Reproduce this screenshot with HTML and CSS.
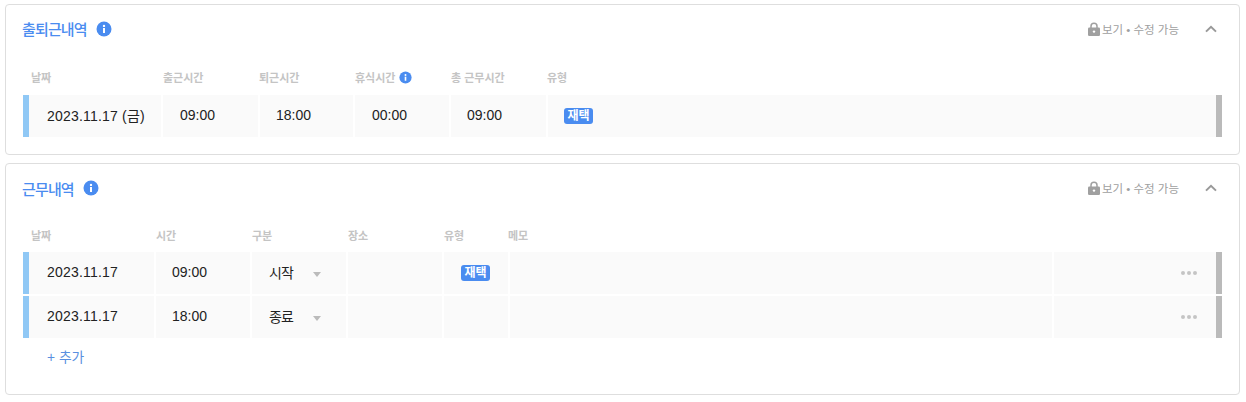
FILE: index.html
```html
<!DOCTYPE html>
<html lang="ko">
<head>
<meta charset="utf-8">
<title>근무내역</title>
<link rel="stylesheet" href="styles.css">
</head>
<body>
<svg class="defs" width="0" height="0" aria-hidden="true">
  <symbol id="info" viewBox="0 0 16 16"><circle cx="8" cy="8" r="7.5" fill="#4a8cf0"/><rect x="7" y="7" width="2" height="5" fill="#fff"/><circle cx="8" cy="4.9" r="1.2" fill="#fff"/></symbol>
  <symbol id="lock" viewBox="0 0 12 14"><path d="M3 6V4.2a3 3 0 0 1 6 0V6" fill="none" stroke="#a0a0a0" stroke-width="1.5"/><rect x="0" y="5.6" width="12" height="8.4" rx="1.2" fill="#a0a0a0"/><circle cx="6" cy="9.6" r="1.2" fill="#fff"/></symbol>
  <symbol id="chev" viewBox="0 0 12 8"><path d="M1 6.6 6 1.8l5 4.8" fill="none" stroke="#999" stroke-width="2"/></symbol>
</svg>
<section class="card card-a">
  <header class="head">
    <h2 class="title">출퇴근내역</h2>
    <svg class="info info-lg"><use href="#info"/></svg>
    <div class="perm"><svg class="lock"><use href="#lock"/></svg><span>보기 • 수정 가능</span></div>
    <svg class="chev"><use href="#chev"/></svg>
  </header>
  <div class="labels cols-a">
    <span>날짜</span><span>출근시간</span><span>퇴근시간</span>
    <span class="with-info">휴식시간 <svg class="info info-sm"><use href="#info"/></svg></span>
    <span>총 근무시간</span><span>유형</span>
  </div>
  <div class="row cols-a">
    <div class="cell date">2023.11.17 (금)</div>
    <div class="cell time">09:00</div>
    <div class="cell time">18:00</div>
    <div class="cell time">00:00</div>
    <div class="cell time">09:00</div>
    <div class="cell tagcell"><span class="tag">재택</span></div>
  </div>
</section>
<section class="card card-b">
  <header class="head">
    <h2 class="title">근무내역</h2>
    <svg class="info info-lg"><use href="#info"/></svg>
    <div class="perm"><svg class="lock"><use href="#lock"/></svg><span>보기 • 수정 가능</span></div>
    <svg class="chev"><use href="#chev"/></svg>
  </header>
  <div class="labels cols-b">
    <span>날짜</span><span>시간</span><span>구분</span><span>장소</span><span>유형</span><span>메모</span>
  </div>
  <div class="row cols-b">
    <div class="cell date">2023.11.17</div>
    <div class="cell time">09:00</div>
    <div class="cell select">시작<i class="caret"></i></div>
    <div class="cell"></div>
    <div class="cell tagcell"><span class="tag">재택</span></div>
    <div class="cell"></div>
    <div class="cell more"><i></i><i></i><i></i></div>
  </div>
  <div class="row cols-b">
    <div class="cell date">2023.11.17</div>
    <div class="cell time">18:00</div>
    <div class="cell select">종료<i class="caret"></i></div>
    <div class="cell"></div>
    <div class="cell"></div>
    <div class="cell"></div>
    <div class="cell more"><i></i><i></i><i></i></div>
  </div>
  <div class="add">+ 추가</div>
</section>
</body>
</html>
```
FILE: styles.css
```css
* { box-sizing: border-box; }
html, body { margin: 0; padding: 0; }
body {
  width: 1246px;
  height: 402px;
  overflow: hidden;
  background: #fff;
  padding: 4px 6px 0 5px;
  font-family: "Liberation Sans", "Noto Sans CJK KR", sans-serif;
  color: #222;
}
.defs { position: absolute; }
.card {
  border: 1px solid #dedede;
  border-radius: 4px;
  padding: 0 17px 0 16px;
  background: #fff;
}
.card-a { height: 151px; margin-bottom: 8px; }
.card-b { height: 232px; }
.head { display: flex; align-items: center; height: 49px; }
.card-a .head { padding-bottom: 2px; }
.card-b .head { height: 48px; }
.title {
  margin: 0;
  font-size: 15px;
  font-weight: 500;
  letter-spacing: -0.85px;
  color: #4a8cf0;
}
.info { display: block; }
.info-lg { width: 16px; height: 16px; margin-left: 9px; }
.info-sm { width: 13px; height: 13px; margin-left: 4px; }
.perm {
  display: flex;
  align-items: center;
  gap: 2px;
  margin-left: auto;
  margin-right: 26px;
  font-size: 11.5px;
  color: #a0a0a0;
}
.lock { width: 12px; height: 14px; }
.chev { width: 12px; height: 8px; margin-right: 5px; }
.labels {
  display: grid;
  align-items: center;
  height: 41px;
  padding: 5px 0 0 9px;
  font-size: 11px;
  font-weight: 700;
  color: #c4c4c4;
}
.card-b .labels { height: 40px; padding-top: 6px; }
.labels span { white-space: nowrap; }
.with-info { display: flex; align-items: center; }
.cols-a { grid-template-columns: 134px 97px 95px 96px 97px 1fr; }
.labels.cols-a { grid-template-columns: 132px 96px 96px 96px 96px 1fr; }
.cols-b { grid-template-columns: 127px 96px 96px 96px 66px 544px 1fr; }
.labels.cols-b { grid-template-columns: 125px 96px 96px 96px 64px 1fr; }
.row {
  display: grid;
  height: 42px;
  margin-left: 1px;
  border-left: 6px solid #90c8f5;
  border-right: 6px solid #bababa;
  font-size: 14px;
  width: 1199px;
}
.row + .row { margin-top: 2px; }
.cell {
  display: flex;
  align-items: center;
  padding-bottom: 2px;
  background: #fafafa;
  margin-right: 2px;
}
.cell:last-child { margin-right: 0; }
.date { padding-left: 18px; letter-spacing: 0.2px; }
.time { padding-left: 17px; }
.cols-a .time:nth-child(3), .cols-a .time:nth-child(5) { padding-left: 16px; }
.cols-b .time { padding-left: 16px; }
.select { padding-left: 17px; letter-spacing: -1px; }
.caret {
  margin-left: 20px;
  margin-top: 4px;
  border-left: 4.5px solid transparent;
  border-right: 4.5px solid transparent;
  border-top: 5px solid #bbb;
}
.tagcell { padding-left: 16px; padding-bottom: 0; }
.cols-b .tagcell { padding-left: 17px; }
.tag {
  padding: 0 3.5px;
  height: 16px;
  line-height: 16px;
  border-radius: 3px;
  background: #4a8cf0;
  color: #fff;
  font-size: 12px;
  font-weight: 700;
}
.more { justify-content: flex-end; gap: 2px; padding: 0 19px 0 0; }
.more i { width: 4px; height: 4px; border-radius: 50%; background: #c4c4c4; }
.add {
  margin: 12px 0 0 25px;
  font-size: 13.8px;
  line-height: 16px;
  color: #5a8fe0;
}
```
